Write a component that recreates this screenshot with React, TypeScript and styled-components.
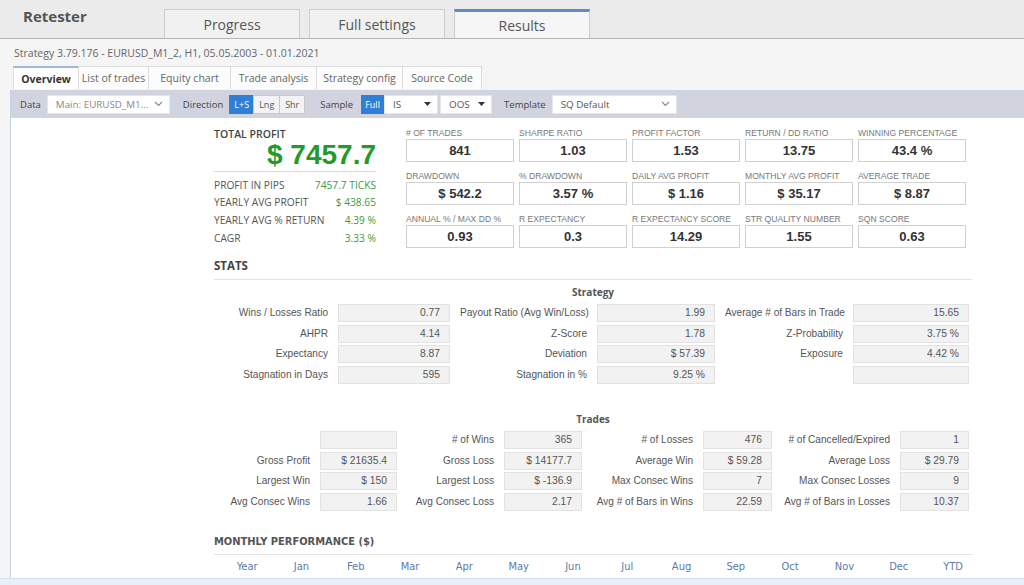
import React from "react";
import styled, { createGlobalStyle, css } from "styled-components";

const Global = createGlobalStyle`
  html, body { margin: 0; padding: 0; background: #f5f5f5; }
  * { box-sizing: border-box; }
`;

const Root = styled.div`
  width: 1024px;
  height: 585px;
  display: flex;
  flex-direction: column;
  overflow: hidden;
  background: #f5f5f5;
  font-family: "Open Sans", "Liberation Sans", sans-serif;
`;

const Header = styled.div`
  height: 39px;
  flex: none;
  display: flex;
  align-items: flex-end;
  background: #ebebeb;
  border-bottom: 1px solid #b5b5b5;
`;

const Brand = styled.div`
  width: 164px;
  align-self: flex-start;
  padding: 6px 0 0 23px;
  font-size: 15px;
  font-weight: 700;
  color: #555;
`;

const MainTabs = styled.div`
  display: flex;
  gap: 9px;
`;

const MainTab = styled.div<{ $active?: boolean }>`
  width: 136px;
  height: 29px;
  display: flex;
  align-items: center;
  justify-content: center;
  font-size: 14px;
  color: #555;
  background: #f1f1f1;
  border: 1px solid #cdcdcd;
  border-bottom: none;
  ${(p) =>
    p.$active &&
    css`
      background: #f6f6f6;
      border-top: 3px solid #5f8cc4;
      padding-top: 0;
    `}
`;

const InfoBar = styled.div`
  height: 51px;
  flex: none;
  padding-left: 13px;
  display: flex;
  flex-direction: column;
`;

const StrategyLine = styled.div`
  height: 27px;
  display: flex;
  align-items: center;
  padding-left: 1px;
  font-size: 10.5px;
  color: #666;
`;

const SubTabs = styled.div`
  display: flex;
  height: 23px;
`;

const SubTab = styled.div<{ $active?: boolean; $w: number }>`
  width: ${(p) => p.$w}px;
  height: 23px;
  display: flex;
  align-items: center;
  justify-content: center;
  font-size: 10.5px;
  color: #666;
  background: #fcfcfc;
  border: 1px solid #dcdcdc;
  border-bottom: none;
  margin-left: -1px;
  white-space: nowrap;
  &:first-child { margin-left: 0; }
  ${(p) =>
    p.$active &&
    css`
      font-weight: 700;
      color: #333;
      background: #fff;
      border-top: 2px solid #9fb8d8;
    `}
`;

const Panel = styled.div`
  flex: 1;
  min-height: 0;
  margin-left: 10px;
  border-left: 1px solid #c9d3df;
  background: #fff;
  display: flex;
  flex-direction: column;
`;

const Toolbar = styled.div`
  height: 28px;
  flex: none;
  display: flex;
  align-items: center;
  padding-left: 9px;
  background: #d1d4de;
`;

const ToolLabel = styled.span<{ $ml?: number }>`
  font-size: 9.5px;
  color: #444;
  margin-left: ${(p) => p.$ml ?? 0}px;
  margin-right: 6px;
  white-space: nowrap;
`;

const SelectBox = styled.div<{ $w: number; $muted?: boolean; $ml?: number }>`
  width: ${(p) => p.$w}px;
  height: 19px;
  margin-left: ${(p) => p.$ml ?? 0}px;
  background: #fff;
  display: flex;
  align-items: center;
  justify-content: space-between;
  padding: 0 6px 0 8px;
  font-size: 9.8px;
  white-space: nowrap;
  overflow: hidden;
  color: ${(p) => (p.$muted ? "#888" : "#555")};
  border: 1px solid #e6e6e6;
`;

const Segment = styled.div<{ $ml?: number }>`
  display: flex;
  height: 19px;
  margin-left: ${(p) => p.$ml ?? 0}px;
`;

const SegBtn = styled.div<{ $active?: boolean; $w: number }>`
  width: ${(p) => p.$w}px;
  height: 19px;
  display: flex;
  align-items: center;
  justify-content: center;
  font-size: 9px;
  color: ${(p) => (p.$active ? "#fff" : "#555")};
  background: ${(p) => (p.$active ? "#2e7fd5" : "#f3f3f3")};
  border: 1px solid ${(p) => (p.$active ? "#2e7fd5" : "#c9c9c9")};
  margin-left: -1px;
  &:first-child { margin-left: 0; }
`;

const Content = styled.div`
  flex: 1;
  min-height: 0;
  overflow: hidden;
  padding: 9px 0 0 203px;
  font-family: "Liberation Sans", Arial, sans-serif;
`;

const Summary = styled.div`
  display: flex;
  gap: 30px;
`;

const TotalBlock = styled.div`
  width: 162px;
  font-family: "Open Sans", "Liberation Sans", sans-serif;
`;

const TotalTitle = styled.div`
  font-size: 10.5px;
  line-height: 14px;
  font-weight: 600;
  color: #444;
`;

const BigValue = styled.div`
  text-align: right;
  font-family: "Liberation Sans", Arial, sans-serif;
  font-size: 28px;
  line-height: 28px;
  font-weight: 700;
  color: #239a2c;
  padding-bottom: 2px;
  border-bottom: 1px solid #dcdcdc;
  margin-bottom: 4px;
`;

const KV = styled.div`
  display: flex;
  justify-content: space-between;
  align-items: center;
  height: 17.6px;
  font-size: 10.2px;
  color: #555;
`;

const KVValue = styled.span`
  color: #3d9b3d;
`;

const MetricsGrid = styled.div`
  display: grid;
  grid-template-columns: repeat(5, 108px);
  column-gap: 5px;
  row-gap: 8px;
`;

const MetricLabel = styled.div`
  font-size: 8.6px;
  line-height: 12px;
  color: #777;
  white-space: nowrap;
`;

const MetricBox = styled.div`
  height: 23px;
  border: 1px solid #d0d0d0;
  background: #fff;
  display: flex;
  align-items: center;
  justify-content: center;
  font-size: 13px;
  font-weight: 700;
  color: #333;
`;

const SectionTitle = styled.div<{ $mt: number; $narrow?: boolean }>`
  width: 758px;
  margin-top: ${(p) => p.$mt}px;
  line-height: 16px;
  padding-bottom: ${(p) => (p.$narrow ? 4 : 5)}px;
  border-bottom: 1px solid #e3e3e3;
  font-family: ${(p) =>
    p.$narrow
      ? `"DejaVu Sans Condensed", "Liberation Sans", sans-serif`
      : `"Open Sans", "Liberation Sans", sans-serif`};
  font-size: ${(p) => (p.$narrow ? 11 : 11.5)}px;
  font-weight: 700;
  color: ${(p) => (p.$narrow ? "#555" : "#444")};
`;

const GroupTitle = styled.div<{ $mt: number }>`
  width: 758px;
  margin-top: ${(p) => p.$mt}px;
  line-height: 14px;
  text-align: center;
  font-family: "Open Sans", "Liberation Sans", sans-serif;
  font-size: 10px;
  font-weight: 700;
  color: #555;
`;

const StatsGrid = styled.div<{ $cols: string }>`
  display: grid;
  grid-template-columns: ${(p) => p.$cols};
  column-gap: 10px;
  row-gap: 2.5px;
  margin-top: 5px;
`;

const StatLabel = styled.div`
  height: 18px;
  line-height: 18px;
  text-align: right;
  font-size: 10.1px;
  color: #555;
  white-space: nowrap;
`;

const StatValue = styled.div`
  height: 18px;
  line-height: 16px;
  text-align: right;
  padding-right: 9px;
  font-size: 10.3px;
  color: #555;
  background: #f2f2f2;
  border: 1px solid #e2e2e2;
  white-space: nowrap;
`;

const MonthsRow = styled.div`
  display: grid;
  grid-template-columns: repeat(14, 54.3px);
  margin: 4px 0 0 6px;
`;

const MonthCell = styled.div`
  line-height: 16px;
  text-align: center;
  font-family: "DejaVu Sans Condensed", "Liberation Sans", sans-serif;
  font-size: 11px;
  color: #5a7ba9;
`;

const BottomBar = styled.div`
  height: 7px;
  flex: none;
  background: #e7f0f9;
  border-top: 1px solid #d3e1ef;
`;

const Chevron = () => (
  <svg width="9" height="6" viewBox="0 0 9 6">
    <polyline points="1,1 4.5,4.5 8,1" fill="none" stroke="#888" strokeWidth="1.1" />
  </svg>
);

const Caret = () => (
  <svg width="7" height="4" viewBox="0 0 7 4">
    <polygon points="0,0 7,0 3.5,4" fill="#333" />
  </svg>
);

const metrics: [string, string][] = [
  ["# OF TRADES", "841"],
  ["SHARPE RATIO", "1.03"],
  ["PROFIT FACTOR", "1.53"],
  ["RETURN / DD RATIO", "13.75"],
  ["WINNING PERCENTAGE", "43.4 %"],
  ["DRAWDOWN", "$ 542.2"],
  ["% DRAWDOWN", "3.57 %"],
  ["DAILY AVG PROFIT", "$ 1.16"],
  ["MONTHLY AVG PROFIT", "$ 35.17"],
  ["AVERAGE TRADE", "$ 8.87"],
  ["ANNUAL % / MAX DD %", "0.93"],
  ["R EXPECTANCY", "0.3"],
  ["R EXPECTANCY SCORE", "14.29"],
  ["STR QUALITY NUMBER", "1.55"],
  ["SQN SCORE", "0.63"],
];

const strategyRows: string[][] = [
  ["Wins / Losses Ratio", "0.77", "Payout Ratio (Avg Win/Loss)", "1.99", "Average # of Bars in Trade", "15.65"],
  ["AHPR", "4.14", "Z-Score", "1.78", "Z-Probability", "3.75 %"],
  ["Expectancy", "8.87", "Deviation", "$ 57.39", "Exposure", "4.42 %"],
  ["Stagnation in Days", "595", "Stagnation in %", "9.25 %", "", ""],
];

const tradeRows: string[][] = [
  ["", "", "# of Wins", "365", "# of Losses", "476", "# of Cancelled/Expired", "1"],
  ["Gross Profit", "$ 21635.4", "Gross Loss", "$ 14177.7", "Average Win", "$ 59.28", "Average Loss", "$ 29.79"],
  ["Largest Win", "$ 150", "Largest Loss", "$ -136.9", "Max Consec Wins", "7", "Max Consec Losses", "9"],
  ["Avg Consec Wins", "1.66", "Avg Consec Loss", "2.17", "Avg # of Bars in Wins", "22.59", "Avg # of Bars in Losses", "10.37"],
];

const months = ["Year", "Jan", "Feb", "Mar", "Apr", "May", "Jun", "Jul", "Aug", "Sep", "Oct", "Nov", "Dec", "YTD"];

const subTabs: [string, number][] = [
  ["Overview", 66],
  ["List of trades", 71],
  ["Equity chart", 83],
  ["Trade analysis", 87],
  ["Strategy config", 87],
  ["Source Code", 80],
];

const renderRows = (rows: string[][]) =>
  rows.flatMap((r, ri) =>
    r.map((c, ci) =>
      ci % 2 === 0 ? (
        <StatLabel key={`${ri}-${ci}`}>{c}</StatLabel>
      ) : (
        <StatValue key={`${ri}-${ci}`}>{c}</StatValue>
      )
    )
  );

export default function App() {
  return (
    <Root>
      <Global />
      <Header>
        <Brand>Retester</Brand>
        <MainTabs>
          <MainTab>Progress</MainTab>
          <MainTab>Full settings</MainTab>
          <MainTab $active>Results</MainTab>
        </MainTabs>
      </Header>
      <InfoBar>
        <StrategyLine>Strategy 3.79.176 - EURUSD_M1_2, H1, 05.05.2003 - 01.01.2021</StrategyLine>
        <SubTabs>
          {subTabs.map(([t, w], i) => (
            <SubTab key={t} $w={w} $active={i === 0}>
              {t}
            </SubTab>
          ))}
        </SubTabs>
      </InfoBar>
      <Panel>
        <Toolbar>
          <ToolLabel>Data</ToolLabel>
          <SelectBox $w={123} $muted>
            <span>Main: EURUSD_M1...</span>
            <Chevron />
          </SelectBox>
          <ToolLabel $ml={13}>Direction</ToolLabel>
          <Segment>
            <SegBtn $active $w={25}>L+S</SegBtn>
            <SegBtn $w={27}>Lng</SegBtn>
            <SegBtn $w={26}>Shr</SegBtn>
          </Segment>
          <ToolLabel $ml={15}>Sample</ToolLabel>
          <Segment $ml={2}>
            <SegBtn $active $w={23}>Full</SegBtn>
          </Segment>
          <SelectBox $w={54}>
            <span>IS</span>
            <Caret />
          </SelectBox>
          <SelectBox $w={52} $ml={2}>
            <span>OOS</span>
            <Caret />
          </SelectBox>
          <ToolLabel $ml={12}>Template</ToolLabel>
          <SelectBox $w={125}>
            <span>SQ Default</span>
            <Chevron />
          </SelectBox>
        </Toolbar>
        <Content>
          <Summary>
            <TotalBlock>
              <TotalTitle>TOTAL PROFIT</TotalTitle>
              <BigValue>$ 7457.7</BigValue>
              <KV>
                <span>PROFIT IN PIPS</span>
                <KVValue>7457.7 TICKS</KVValue>
              </KV>
              <KV>
                <span>YEARLY AVG PROFIT</span>
                <KVValue>$ 438.65</KVValue>
              </KV>
              <KV>
                <span>YEARLY AVG % RETURN</span>
                <KVValue>4.39 %</KVValue>
              </KV>
              <KV>
                <span>CAGR</span>
                <KVValue>3.33 %</KVValue>
              </KV>
            </TotalBlock>
            <MetricsGrid>
              {metrics.map(([l, v]) => (
                <div key={l}>
                  <MetricLabel>{l}</MetricLabel>
                  <MetricBox>{v}</MetricBox>
                </div>
              ))}
            </MetricsGrid>
          </Summary>
          <SectionTitle $mt={9.5}>STATS</SectionTitle>
          <GroupTitle $mt={5.5}>Strategy</GroupTitle>
          <StatsGrid $cols="114px 112px 127px 118px 118px 116px">{renderRows(strategyRows)}</StatsGrid>
          <GroupTitle $mt={28.5}>Trades</GroupTitle>
          <StatsGrid $cols="96px 77px 87px 78px 101px 69px 108px 69px">{renderRows(tradeRows)}</StatsGrid>
          <SectionTitle $mt={23.5} $narrow>
            MONTHLY PERFORMANCE ($)
          </SectionTitle>
          <MonthsRow>
            {months.map((m) => (
              <MonthCell key={m}>{m}</MonthCell>
            ))}
          </MonthsRow>
        </Content>
      </Panel>
      <BottomBar />
    </Root>
  );
}
